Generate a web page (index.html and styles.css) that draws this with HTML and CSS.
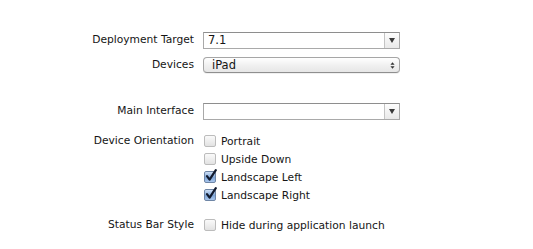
FILE: index.html
```html
<!DOCTYPE html>
<html lang="en">
<head>
  <meta charset="UTF-8" />
  <title>Deployment Info</title>
  <link rel="stylesheet" href="styles.css">
</head>
<body>
  <main class="settings">
    <div class="row row-target">
      <label class="row-label">Deployment Target</label>
      <div class="combo">
        <span class="combo-value">7.1</span>
        <span class="combo-btn"><span class="tri"></span></span>
      </div>
    </div>

    <div class="row row-devices">
      <label class="row-label">Devices</label>
      <div class="popup">
        <span class="popup-value">iPad</span>
        <span class="popup-arrows">
          <svg viewBox="0 0 6 10" xmlns="http://www.w3.org/2000/svg"><path d="M0.5 4 L3 1 L5.5 4 Z"/><path d="M0.5 6 L3 9 L5.5 6 Z"/></svg>
        </span>
      </div>
    </div>

    <div class="row row-main">
      <label class="row-label">Main Interface</label>
      <div class="combo">
        <span class="combo-value"></span>
        <span class="combo-btn"><span class="tri"></span></span>
      </div>
    </div>

    <div class="row row-orient">
      <label class="row-label">Device Orientation</label>
      <div class="checks">
        <div class="check"><span class="box"></span>Portrait</div>
        <div class="check"><span class="box"></span>Upside Down</div>
        <div class="check"><span class="box on"><svg viewBox="0 0 14 14" xmlns="http://www.w3.org/2000/svg"><path d="M3 7.2 L5.6 10.6 L11.8 1.2"/></svg></span>Landscape Left</div>
        <div class="check"><span class="box on"><svg viewBox="0 0 14 14" xmlns="http://www.w3.org/2000/svg"><path d="M3 7.2 L5.6 10.6 L11.8 1.2"/></svg></span>Landscape Right</div>
      </div>
    </div>

    <div class="row row-status">
      <label class="row-label">Status Bar Style</label>
      <div class="checks">
        <div class="check"><span class="box"></span>Hide during application launch</div>
      </div>
    </div>
  </main>
</body>
</html>
```

FILE: styles.css
```css
body {
  margin: 0;
  background: #fff;
  color: #151515;
  font-family: 'DejaVu Sans', sans-serif;
  font-size: 10.7px;
}
.settings {
  display: flex;
  flex-direction: column;
  padding-top: 31px;
}
.row {
  display: grid;
  grid-template-columns: 194px 197px;
  column-gap: 9px;
  align-items: center;
}
.row-label {
  text-align: right;
  line-height: 18px;
}
.row-orient .row-label,
.row-status .row-label {
  align-self: start;
}
.row-devices { margin-top: 7px; }
.row-main { margin-top: 28px; }
.row-orient { margin-top: 12px; }
.row-status { margin-top: 12px; }

.combo {
  display: flex;
  height: 17px;
  border: 1px solid #a9a9a9;
  border-top-color: #8e8e8e;
  background: #fff;
  box-sizing: border-box;
}
.combo-value {
  flex: 1;
  padding-left: 4px;
  line-height: 15px;
  font-size: 11.5px;
}
.combo-btn {
  width: 14px;
  border-left: 1px solid #c4c4c4;
  background: linear-gradient(#fdfdfd, #e9e9e9);
  display: flex;
  align-items: center;
  justify-content: center;
}
.tri {
  width: 0;
  height: 0;
  border-left: 3px solid transparent;
  border-right: 3px solid transparent;
  border-top: 5px solid #3a3a3a;
  margin-top: 1px;
}

.popup {
  display: flex;
  align-items: center;
  height: 16px;
  border: 1px solid #a6a6a6;
  border-bottom-color: #8f8f8f;
  border-radius: 4px;
  background: linear-gradient(#ffffff, #f1f1f1 50%, #e6e6e6);
  box-shadow: 0 1px 0 rgba(0,0,0,0.06);
  box-sizing: border-box;
}
.popup-value {
  flex: 1;
  padding-left: 8px;
  font-size: 11.5px;
}
.popup-arrows {
  width: 14px;
  display: flex;
  justify-content: center;
}
.popup-arrows svg {
  width: 5px;
  height: 9px;
  fill: #333;
}

.checks {
  display: flex;
  flex-direction: column;
}
.check {
  display: flex;
  align-items: center;
  gap: 5px;
  height: 18px;
  margin-left: 1px;
}
.box {
  position: relative;
  width: 10px;
  height: 10px;
  border: 1px solid #bcbcbc;
  border-radius: 2px;
  background: linear-gradient(#fafafa, #e2e2e2);
  flex: none;
}
.box.on {
  border-color: #6f86a6;
  background: linear-gradient(#cfe0f6, #7fa6d8 55%, #a9c6ec);
}
.box svg {
  position: absolute;
  left: -1px;
  top: -3px;
  width: 14px;
  height: 14px;
  fill: none;
  stroke: #111a2e;
  stroke-width: 2.2;
  stroke-linecap: round;
  stroke-linejoin: round;
}
```
